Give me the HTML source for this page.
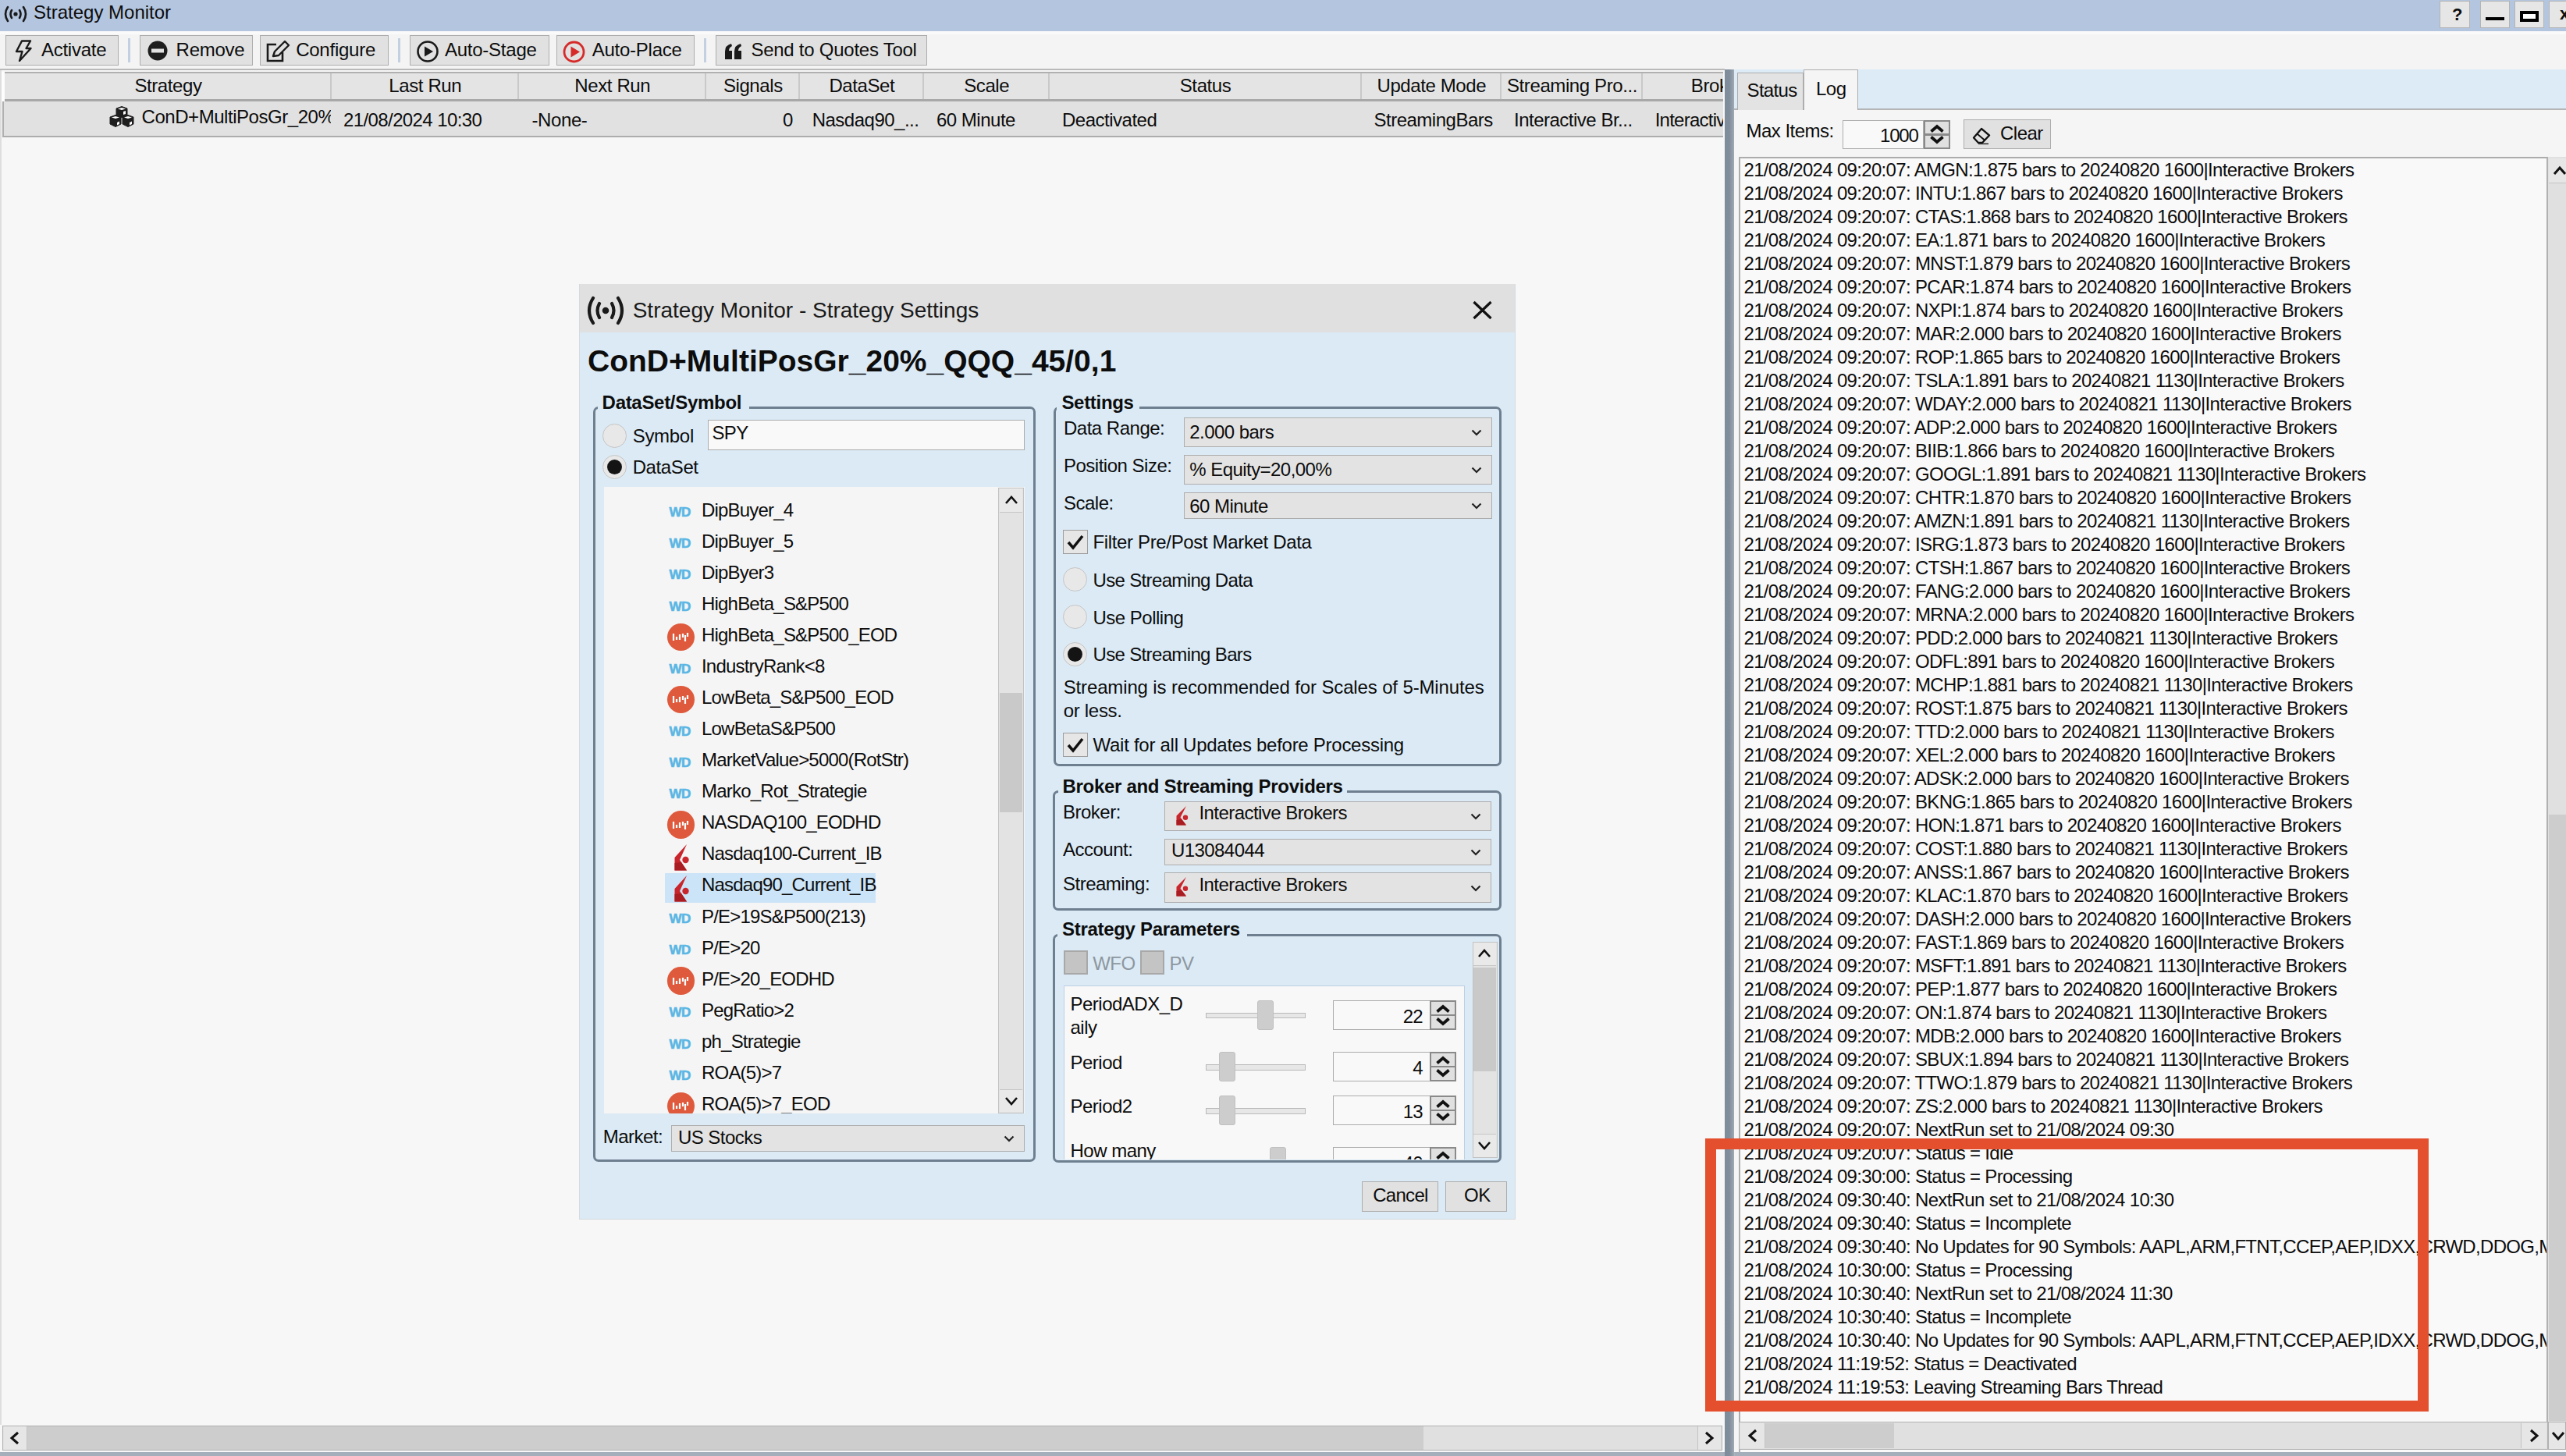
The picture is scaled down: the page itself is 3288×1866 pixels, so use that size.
<!DOCTYPE html><html><head><meta charset="utf-8"><style>
html,body{margin:0;padding:0}
body{width:3288px;height:1866px;overflow:hidden;position:relative;background:#f7f7f7;font-family:"Liberation Sans",sans-serif;color:#000}
.t{position:absolute;white-space:pre;line-height:1;color:#0d0d0d}
.b{position:absolute;box-sizing:border-box}
</style></head><body><div class="b" style="left:0.0px;top:0.0px;width:3288.0px;height:40.0px;background:#b3c5df"></div>
<svg class="b" style="left:4.0px;top:7.0px;" width="32" height="22" viewBox="0 0 32 22"><g fill="none" stroke="#1a1a1a" stroke-width="2.6" stroke-linecap="round"><path d="M6 2 Q0 11 6 20"/><path d="M26 2 Q32 11 26 20"/><path d="M11 6 Q8 11 11 16"/><path d="M21 6 Q24 11 21 16"/></g><circle cx="16" cy="11" r="2.6" fill="#1a1a1a"/></svg>
<div class="t" style="left:43.0px;top:4.2px;font-size:24px;font-weight:400;color:#0d0d0d;letter-spacing:0px;">Strategy Monitor</div>
<div class="b" style="left:3126.0px;top:1.0px;width:39.0px;height:35.0px;background:#e6e6e6;border:1.5px solid #b4b4b4"></div>
<div class="b" style="left:3178.0px;top:1.0px;width:38.0px;height:35.0px;background:#e6e6e6;border:1.5px solid #b4b4b4"></div>
<div class="b" style="left:3222.0px;top:1.0px;width:38.0px;height:35.0px;background:#e6e6e6;border:1.5px solid #b4b4b4"></div>
<div class="b" style="left:3266.0px;top:1.0px;width:38.0px;height:35.0px;background:#e6e6e6;border:1.5px solid #b4b4b4"></div>
<div class="t" style="left:3142.0px;top:8.4px;font-size:22px;font-weight:700;color:#0d0d0d;letter-spacing:0px;">?</div>
<div class="b" style="left:3185.0px;top:22.0px;width:24.0px;height:4.0px;background:#000"></div>
<div class="b" style="left:3229.0px;top:14.0px;width:24.0px;height:14.0px;border:4px solid #000;background:#fff"></div>
<div class="t" style="left:3280.0px;top:7.4px;font-size:22px;font-weight:700;color:#0d0d0d;letter-spacing:0px;">x</div>
<div class="b" style="left:0.0px;top:40.0px;width:3288.0px;height:49.0px;background:#f4f4f4"></div>
<div class="b" style="left:0.0px;top:40.0px;width:3288.0px;height:4.0px;background:#fafafa"></div>
<div class="b" style="left:0.0px;top:88.0px;width:2210.0px;height:2.0px;background:#b9b9b9"></div>
<div class="b" style="left:7.0px;top:45.0px;width:144.5px;height:38.5px;background:#e1e1e1;border:1.5px solid #adadad"></div>
<div class="t" style="left:52.9px;top:51.7px;font-size:24px;font-weight:400;color:#0d0d0d;letter-spacing:-0.25px;">Activate</div>
<div class="b" style="left:178.5px;top:45.0px;width:145.5px;height:38.5px;background:#e1e1e1;border:1.5px solid #adadad"></div>
<div class="t" style="left:225.6px;top:51.7px;font-size:24px;font-weight:400;color:#0d0d0d;letter-spacing:-0.25px;">Remove</div>
<div class="b" style="left:332.5px;top:45.0px;width:165.0px;height:38.5px;background:#e1e1e1;border:1.5px solid #adadad"></div>
<div class="t" style="left:379.2px;top:51.7px;font-size:24px;font-weight:400;color:#0d0d0d;letter-spacing:-0.25px;">Configure</div>
<div class="b" style="left:524.5px;top:45.0px;width:179.5px;height:38.5px;background:#e1e1e1;border:1.5px solid #adadad"></div>
<div class="t" style="left:570.0px;top:51.7px;font-size:24px;font-weight:400;color:#0d0d0d;letter-spacing:-0.25px;">Auto-Stage</div>
<div class="b" style="left:712.5px;top:45.0px;width:177.1px;height:38.5px;background:#e1e1e1;border:1.5px solid #adadad"></div>
<div class="t" style="left:758.7px;top:51.7px;font-size:24px;font-weight:400;color:#0d0d0d;letter-spacing:-0.25px;">Auto-Place</div>
<div class="b" style="left:916.5px;top:45.0px;width:271.0px;height:38.5px;background:#e1e1e1;border:1.5px solid #adadad"></div>
<div class="t" style="left:962.4px;top:51.7px;font-size:24px;font-weight:400;color:#0d0d0d;letter-spacing:-0.25px;">Send to Quotes Tool</div>
<div class="b" style="left:164.0px;top:49.0px;width:2.5px;height:31.0px;background:#c3d0e2"></div>
<div class="b" style="left:510.0px;top:49.0px;width:2.5px;height:31.0px;background:#c3d0e2"></div>
<div class="b" style="left:902.0px;top:49.0px;width:2.5px;height:31.0px;background:#c3d0e2"></div>
<svg class="b" style="left:19.0px;top:51.0px;" width="22" height="28" viewBox="0 0 22 28"><path d="M9 1.5 L20 1.5 L14.5 11 L20.5 11 L6 27 L9.5 15 L2 15 Z" fill="none" stroke="#1a1a1a" stroke-width="2.4" stroke-linejoin="round"/></svg>
<svg class="b" style="left:188.0px;top:52.0px;" width="28" height="26" viewBox="0 0 28 26"><circle cx="14" cy="13" r="12.5" fill="#1e1e1e"/><rect x="6" y="10.5" width="16" height="5" fill="#e1e1e1"/></svg>
<svg class="b" style="left:340.0px;top:51.0px;" width="32" height="30" viewBox="0 0 32 30"><path d="M14 6 H3 V27 H22 V16" fill="none" stroke="#1a1a1a" stroke-width="2.6"/><path d="M10 21 L12 15 L25 2 L30 7 L17 20 Z" fill="none" stroke="#1a1a1a" stroke-width="2.4" stroke-linejoin="round"/></svg>
<svg class="b" style="left:533.0px;top:51.0px;" width="30" height="30" viewBox="0 0 30 30"><circle cx="15" cy="15" r="12.5" fill="none" stroke="#1a1a1a" stroke-width="2.6"/><path d="M11 8.5 L22 15 L11 21.5 Z" fill="#1a1a1a"/></svg>
<svg class="b" style="left:720.0px;top:51.0px;" width="31" height="31" viewBox="0 0 31 31"><circle cx="15.5" cy="15.5" r="12.5" fill="none" stroke="#d62a2a" stroke-width="2.8"/><path d="M11.5 8.5 L23 15.5 L11.5 22.5 Z" fill="#d62a2a"/></svg>
<svg class="b" style="left:928.0px;top:55.0px;" width="24" height="22" viewBox="0 0 24 22"><path d="M1 21 V11 Q1 3 9 1 L10 4 Q6 6 6 10 H10 V21 Z M13 21 V11 Q13 3 21 1 L22 4 Q18 6 18 10 H22 V21 Z" fill="#1a1a1a"/></svg>
<div class="b" style="left:0.0px;top:90.0px;width:2210.0px;height:1776.0px;background:#f7f7f7"></div>
<div class="b" style="left:0.0px;top:92.0px;width:6.0px;height:38.0px;background:#fdfdfd"></div>
<div class="b" style="left:0.0px;top:90.0px;width:1.5px;height:1736.0px;background:#dedede"></div>
<div class="b" style="left:6.0px;top:92.0px;width:2202.0px;height:38.0px;background:#e4e4e4;border-top:2px solid #b0b0b0;border-bottom:3px solid #a8a8a8"></div>
<div class="b" style="left:6px;top:94px;width:2202px;height:33px;overflow:hidden">
<div class="b" style="left:0.0px;top:0;width:419.0px;height:33px;border-right:2px solid #c9c9c9"></div>
<div class="t" style="left:0.0px;width:419.0px;top:4.1px;font-size:24px;text-align:center;letter-spacing:-0.4px">Strategy</div>
<div class="b" style="left:419.0px;top:0;width:239.6px;height:33px;border-right:2px solid #c9c9c9"></div>
<div class="t" style="left:419.0px;width:239.6px;top:4.1px;font-size:24px;text-align:center;letter-spacing:-0.4px">Last Run</div>
<div class="b" style="left:658.6px;top:0;width:240.4px;height:33px;border-right:2px solid #c9c9c9"></div>
<div class="t" style="left:658.6px;width:240.4px;top:4.1px;font-size:24px;text-align:center;letter-spacing:-0.4px">Next Run</div>
<div class="b" style="left:899.0px;top:0;width:119.7px;height:33px;border-right:2px solid #c9c9c9"></div>
<div class="t" style="left:899.0px;width:119.7px;top:4.1px;font-size:24px;text-align:center;letter-spacing:-0.4px">Signals</div>
<div class="b" style="left:1018.7px;top:0;width:159.3px;height:33px;border-right:2px solid #c9c9c9"></div>
<div class="t" style="left:1018.7px;width:159.3px;top:4.1px;font-size:24px;text-align:center;letter-spacing:-0.4px">DataSet</div>
<div class="b" style="left:1178.0px;top:0;width:160.5px;height:33px;border-right:2px solid #c9c9c9"></div>
<div class="t" style="left:1178.0px;width:160.5px;top:4.1px;font-size:24px;text-align:center;letter-spacing:-0.4px">Scale</div>
<div class="b" style="left:1338.5px;top:0;width:400.2px;height:33px;border-right:2px solid #c9c9c9"></div>
<div class="t" style="left:1338.5px;width:400.2px;top:4.1px;font-size:24px;text-align:center;letter-spacing:-0.4px">Status</div>
<div class="b" style="left:1738.7px;top:0;width:179.3px;height:33px;border-right:2px solid #c9c9c9"></div>
<div class="t" style="left:1738.7px;width:179.3px;top:4.1px;font-size:24px;text-align:center;letter-spacing:-0.4px">Update Mode</div>
<div class="b" style="left:1918.0px;top:0;width:181.0px;height:33px;border-right:2px solid #c9c9c9"></div>
<div class="t" style="left:1918.0px;width:181.0px;top:4.1px;font-size:24px;text-align:center;letter-spacing:-0.4px">Streaming Pro...</div>
<div class="b" style="left:2099.0px;top:0;width:192.0px;height:33px;border-right:2px solid #c9c9c9"></div>
<div class="t" style="left:2099.0px;width:192.0px;top:4.1px;font-size:24px;text-align:center;letter-spacing:-0.4px">Broker</div>
</div>
<div class="b" style="left:3.0px;top:130.0px;width:2205.0px;height:46.0px;background:#e1e1e1;border-left:2px solid #b0b0b0;border-bottom:2px solid #adadad"></div>
<svg class="b" style="left:140.0px;top:136.0px;" width="33" height="29" viewBox="0 0 33 29"><g fill="#1e1e1e" stroke="#1e1e1e" stroke-width="1"><path d="M9 3 L16 0.5 L23 3 L23 12 L16 14.5 L9 12 Z"/><path d="M1 14 L8 11.5 L15 14 L15 23 L8 26.5 L1 23 Z"/><path d="M17 14 L24 11.5 L31 14 L31 23 L24 26.5 L17 23 Z"/></g><g fill="#fff"><path d="M11 3.5 L16 2 L21 3.5 L16 5 Z"/><path d="M3 14.5 L8 13 L13 14.5 L8 16 Z"/><path d="M19 14.5 L24 13 L29 14.5 L24 16 Z"/><path d="M10 21 L13 19.5 L13 23 L10 24.5 Z"/><path d="M26 21 L29 19.5 L29 23 L26 24.5 Z"/><path d="M18 7 L21 6 L21 10 L18 11 Z"/></g></svg>
<div class="b" style="left:181px;top:130px;width:243px;height:44px;overflow:hidden">
<div class="t" style="left:0.5px;top:7.7px;font-size:24px;letter-spacing:-0.45px">ConD+MultiPosGr_20%_QQQ</div>
</div>
<div class="t" style="left:440.0px;top:141.7px;font-size:24px;font-weight:400;color:#0d0d0d;letter-spacing:-0.6px;">21/08/2024 10:30</div>
<div class="t" style="left:681.5px;top:141.7px;font-size:24px;font-weight:400;color:#0d0d0d;letter-spacing:-0.4px;">-None-</div>
<div class="t" style="left:1003.0px;top:141.7px;font-size:24px;font-weight:400;color:#0d0d0d;letter-spacing:0px;">0</div>
<div class="t" style="left:1040.7px;top:141.7px;font-size:24px;font-weight:400;color:#0d0d0d;letter-spacing:-0.5px;">Nasdaq90_...</div>
<div class="t" style="left:1200.0px;top:141.7px;font-size:24px;font-weight:400;color:#0d0d0d;letter-spacing:-0.5px;">60 Minute</div>
<div class="t" style="left:1361.0px;top:141.7px;font-size:24px;font-weight:400;color:#0d0d0d;letter-spacing:-0.5px;">Deactivated</div>
<div class="t" style="left:1760.5px;top:141.7px;font-size:24px;font-weight:400;color:#0d0d0d;letter-spacing:-0.5px;">StreamingBars</div>
<div class="t" style="left:1940.0px;top:141.7px;font-size:24px;font-weight:400;color:#0d0d0d;letter-spacing:-0.5px;">Interactive Br...</div>
<div class="b" style="left:2120px;top:130px;width:88px;height:44px;overflow:hidden">
<div class="t" style="left:0.7px;top:11.7px;font-size:24px;letter-spacing:-0.75px">Interactive Brokers</div>
</div>
<div class="b" style="left:3.0px;top:1826.5px;width:2204.0px;height:32.5px;background:#e0e0e0;border:1.5px solid #b1b1b1"></div>
<div class="b" style="left:35.0px;top:1828.0px;width:1788.5px;height:29.5px;background:#cdcdcd"></div>
<div class="b" style="left:4.5px;top:1828.0px;width:30.5px;height:29.5px;background:#e6e6e6;border-right:1.5px solid #c4c4c4"></div>
<div class="b" style="left:2174.6px;top:1828.0px;width:30.9px;height:29.5px;background:#e6e6e6;border-left:1.5px solid #c4c4c4"></div>
<svg class="b" style="left:12.0px;top:1834.0px;" width="14" height="18" viewBox="0 0 14 18"><path d="M11 2 L3 9 L11 16" fill="none" stroke="#111" stroke-width="3"/></svg>
<svg class="b" style="left:2183.0px;top:1834.0px;" width="14" height="18" viewBox="0 0 14 18"><path d="M3 2 L11 9 L3 16" fill="none" stroke="#111" stroke-width="3"/></svg>
<div class="b" style="left:0.0px;top:1861.0px;width:3288.0px;height:5.0px;background:#a5aebb"></div>
<div class="b" style="left:2209.7px;top:89.0px;width:13.8px;height:1777.0px;background:linear-gradient(to right,#7d8b9b,#7f8d9c 45%,#9aa4ae 85%,#b4bac0)"></div>
<div class="b" style="left:2222.0px;top:89.0px;width:1066.0px;height:50.0px;background:#dcebf5"></div>
<div class="b" style="left:2222.0px;top:138.5px;width:1066.0px;height:2.0px;background:#b5b5b5"></div>
<div class="b" style="left:2222.0px;top:140.5px;width:1066.0px;height:1720.5px;background:#f5f5f5"></div>
<div class="b" style="left:2226.0px;top:93.0px;width:85.0px;height:47.5px;background:#e3e3e3;border:1.5px solid #adadad;border-bottom:none"></div>
<div class="b" style="left:2310.5px;top:89.0px;width:70.1px;height:52.0px;background:#f5f5f5;border:1.5px solid #adadad;border-bottom:none"></div>
<div class="t" style="left:2238.6px;top:103.5px;font-size:24px;font-weight:400;color:#0d0d0d;letter-spacing:-0.7px;">Status</div>
<div class="t" style="left:2326.9px;top:101.5px;font-size:24px;font-weight:400;color:#0d0d0d;letter-spacing:-0.4px;">Log</div>
<div class="t" style="left:2237.4px;top:155.7px;font-size:24px;font-weight:400;color:#0d0d0d;letter-spacing:-0.5px;">Max Items:</div>
<div class="b" style="left:2361.0px;top:153.6px;width:103.5px;height:37.4px;background:#f9f9f9;border:1.5px solid #acacac"></div>
<div class="t" style="left:2409.0px;top:161.7px;font-size:24px;font-weight:400;color:#0d0d0d;letter-spacing:-1.2px;">1000</div>
<div class="b" style="left:2464.5px;top:153.6px;width:34.5px;height:37.4px;background:#e0e0e0;border:2.5px solid #8a8a8a"></div>
<div class="b" style="left:2466.0px;top:171.0px;width:31.0px;height:2.5px;background:#8a8a8a"></div>
<svg class="b" style="left:2472.0px;top:158.0px;" width="20" height="28" viewBox="0 0 20 28"><path d="M2.5 10.5 L10 4 L17.5 10.5" fill="none" stroke="#111" stroke-width="3.8"/><path d="M2.5 17.5 L10 24 L17.5 17.5" fill="none" stroke="#111" stroke-width="3.8"/></svg>
<div class="b" style="left:2516.3px;top:153.0px;width:112.2px;height:38.4px;background:#e1e1e1;border:1.5px solid #adadad"></div>
<svg class="b" style="left:2526.0px;top:161.0px;" width="26" height="25" viewBox="0 0 26 25"><path d="M3 15.5 L13 4 L23 12.5 L14 22 H9 Z" fill="none" stroke="#111" stroke-width="2.3" stroke-linejoin="round"/><path d="M7.5 10.5 L17.5 19" stroke="#111" stroke-width="2"/><path d="M9 23.3 H22" stroke="#333" stroke-width="1.6"/></svg>
<div class="t" style="left:2563.0px;top:159.2px;font-size:24px;font-weight:400;color:#0d0d0d;letter-spacing:-0.5px;">Clear</div>
<div class="b" style="left:2228.0px;top:200.5px;width:1060.0px;height:1660.5px;background:#f9f9f9;border-top:2px solid #acacac;border-left:2px solid #acacac"></div>
<div class="b" style="left:2230px;top:202.5px;width:1034px;height:1620px;overflow:hidden">
<div class="t" style="left:4.5px;top:3.5px;font-size:24px;letter-spacing:-0.67px">21/08/2024 09:20:07: AMGN:1.875 bars to 20240820 1600|Interactive Brokers</div>
<div class="t" style="left:4.5px;top:33.5px;font-size:24px;letter-spacing:-0.67px">21/08/2024 09:20:07: INTU:1.867 bars to 20240820 1600|Interactive Brokers</div>
<div class="t" style="left:4.5px;top:63.5px;font-size:24px;letter-spacing:-0.67px">21/08/2024 09:20:07: CTAS:1.868 bars to 20240820 1600|Interactive Brokers</div>
<div class="t" style="left:4.5px;top:93.5px;font-size:24px;letter-spacing:-0.67px">21/08/2024 09:20:07: EA:1.871 bars to 20240820 1600|Interactive Brokers</div>
<div class="t" style="left:4.5px;top:123.5px;font-size:24px;letter-spacing:-0.67px">21/08/2024 09:20:07: MNST:1.879 bars to 20240820 1600|Interactive Brokers</div>
<div class="t" style="left:4.5px;top:153.5px;font-size:24px;letter-spacing:-0.67px">21/08/2024 09:20:07: PCAR:1.874 bars to 20240820 1600|Interactive Brokers</div>
<div class="t" style="left:4.5px;top:183.5px;font-size:24px;letter-spacing:-0.67px">21/08/2024 09:20:07: NXPI:1.874 bars to 20240820 1600|Interactive Brokers</div>
<div class="t" style="left:4.5px;top:213.5px;font-size:24px;letter-spacing:-0.67px">21/08/2024 09:20:07: MAR:2.000 bars to 20240820 1600|Interactive Brokers</div>
<div class="t" style="left:4.5px;top:243.5px;font-size:24px;letter-spacing:-0.67px">21/08/2024 09:20:07: ROP:1.865 bars to 20240820 1600|Interactive Brokers</div>
<div class="t" style="left:4.5px;top:273.5px;font-size:24px;letter-spacing:-0.67px">21/08/2024 09:20:07: TSLA:1.891 bars to 20240821 1130|Interactive Brokers</div>
<div class="t" style="left:4.5px;top:303.5px;font-size:24px;letter-spacing:-0.67px">21/08/2024 09:20:07: WDAY:2.000 bars to 20240821 1130|Interactive Brokers</div>
<div class="t" style="left:4.5px;top:333.5px;font-size:24px;letter-spacing:-0.67px">21/08/2024 09:20:07: ADP:2.000 bars to 20240820 1600|Interactive Brokers</div>
<div class="t" style="left:4.5px;top:363.5px;font-size:24px;letter-spacing:-0.67px">21/08/2024 09:20:07: BIIB:1.866 bars to 20240820 1600|Interactive Brokers</div>
<div class="t" style="left:4.5px;top:393.5px;font-size:24px;letter-spacing:-0.67px">21/08/2024 09:20:07: GOOGL:1.891 bars to 20240821 1130|Interactive Brokers</div>
<div class="t" style="left:4.5px;top:423.5px;font-size:24px;letter-spacing:-0.67px">21/08/2024 09:20:07: CHTR:1.870 bars to 20240820 1600|Interactive Brokers</div>
<div class="t" style="left:4.5px;top:453.5px;font-size:24px;letter-spacing:-0.67px">21/08/2024 09:20:07: AMZN:1.891 bars to 20240821 1130|Interactive Brokers</div>
<div class="t" style="left:4.5px;top:483.5px;font-size:24px;letter-spacing:-0.67px">21/08/2024 09:20:07: ISRG:1.873 bars to 20240820 1600|Interactive Brokers</div>
<div class="t" style="left:4.5px;top:513.5px;font-size:24px;letter-spacing:-0.67px">21/08/2024 09:20:07: CTSH:1.867 bars to 20240820 1600|Interactive Brokers</div>
<div class="t" style="left:4.5px;top:543.5px;font-size:24px;letter-spacing:-0.67px">21/08/2024 09:20:07: FANG:2.000 bars to 20240820 1600|Interactive Brokers</div>
<div class="t" style="left:4.5px;top:573.5px;font-size:24px;letter-spacing:-0.67px">21/08/2024 09:20:07: MRNA:2.000 bars to 20240820 1600|Interactive Brokers</div>
<div class="t" style="left:4.5px;top:603.5px;font-size:24px;letter-spacing:-0.67px">21/08/2024 09:20:07: PDD:2.000 bars to 20240821 1130|Interactive Brokers</div>
<div class="t" style="left:4.5px;top:633.5px;font-size:24px;letter-spacing:-0.67px">21/08/2024 09:20:07: ODFL:891 bars to 20240820 1600|Interactive Brokers</div>
<div class="t" style="left:4.5px;top:663.5px;font-size:24px;letter-spacing:-0.67px">21/08/2024 09:20:07: MCHP:1.881 bars to 20240821 1130|Interactive Brokers</div>
<div class="t" style="left:4.5px;top:693.5px;font-size:24px;letter-spacing:-0.67px">21/08/2024 09:20:07: ROST:1.875 bars to 20240821 1130|Interactive Brokers</div>
<div class="t" style="left:4.5px;top:723.5px;font-size:24px;letter-spacing:-0.67px">21/08/2024 09:20:07: TTD:2.000 bars to 20240821 1130|Interactive Brokers</div>
<div class="t" style="left:4.5px;top:753.5px;font-size:24px;letter-spacing:-0.67px">21/08/2024 09:20:07: XEL:2.000 bars to 20240820 1600|Interactive Brokers</div>
<div class="t" style="left:4.5px;top:783.5px;font-size:24px;letter-spacing:-0.67px">21/08/2024 09:20:07: ADSK:2.000 bars to 20240820 1600|Interactive Brokers</div>
<div class="t" style="left:4.5px;top:813.5px;font-size:24px;letter-spacing:-0.67px">21/08/2024 09:20:07: BKNG:1.865 bars to 20240820 1600|Interactive Brokers</div>
<div class="t" style="left:4.5px;top:843.5px;font-size:24px;letter-spacing:-0.67px">21/08/2024 09:20:07: HON:1.871 bars to 20240820 1600|Interactive Brokers</div>
<div class="t" style="left:4.5px;top:873.5px;font-size:24px;letter-spacing:-0.67px">21/08/2024 09:20:07: COST:1.880 bars to 20240821 1130|Interactive Brokers</div>
<div class="t" style="left:4.5px;top:903.5px;font-size:24px;letter-spacing:-0.67px">21/08/2024 09:20:07: ANSS:1.867 bars to 20240820 1600|Interactive Brokers</div>
<div class="t" style="left:4.5px;top:933.5px;font-size:24px;letter-spacing:-0.67px">21/08/2024 09:20:07: KLAC:1.870 bars to 20240820 1600|Interactive Brokers</div>
<div class="t" style="left:4.5px;top:963.5px;font-size:24px;letter-spacing:-0.67px">21/08/2024 09:20:07: DASH:2.000 bars to 20240820 1600|Interactive Brokers</div>
<div class="t" style="left:4.5px;top:993.5px;font-size:24px;letter-spacing:-0.67px">21/08/2024 09:20:07: FAST:1.869 bars to 20240820 1600|Interactive Brokers</div>
<div class="t" style="left:4.5px;top:1023.5px;font-size:24px;letter-spacing:-0.67px">21/08/2024 09:20:07: MSFT:1.891 bars to 20240821 1130|Interactive Brokers</div>
<div class="t" style="left:4.5px;top:1053.5px;font-size:24px;letter-spacing:-0.67px">21/08/2024 09:20:07: PEP:1.877 bars to 20240820 1600|Interactive Brokers</div>
<div class="t" style="left:4.5px;top:1083.5px;font-size:24px;letter-spacing:-0.67px">21/08/2024 09:20:07: ON:1.874 bars to 20240821 1130|Interactive Brokers</div>
<div class="t" style="left:4.5px;top:1113.5px;font-size:24px;letter-spacing:-0.67px">21/08/2024 09:20:07: MDB:2.000 bars to 20240820 1600|Interactive Brokers</div>
<div class="t" style="left:4.5px;top:1143.5px;font-size:24px;letter-spacing:-0.67px">21/08/2024 09:20:07: SBUX:1.894 bars to 20240821 1130|Interactive Brokers</div>
<div class="t" style="left:4.5px;top:1173.5px;font-size:24px;letter-spacing:-0.67px">21/08/2024 09:20:07: TTWO:1.879 bars to 20240821 1130|Interactive Brokers</div>
<div class="t" style="left:4.5px;top:1203.5px;font-size:24px;letter-spacing:-0.67px">21/08/2024 09:20:07: ZS:2.000 bars to 20240821 1130|Interactive Brokers</div>
<div class="t" style="left:4.5px;top:1233.5px;font-size:24px;letter-spacing:-0.67px">21/08/2024 09:20:07: NextRun set to 21/08/2024 09:30</div>
<div class="t" style="left:4.5px;top:1263.5px;font-size:24px;letter-spacing:-0.67px">21/08/2024 09:20:07: Status = Idle</div>
<div class="t" style="left:4.5px;top:1293.5px;font-size:24px;letter-spacing:-0.67px">21/08/2024 09:30:00: Status = Processing</div>
<div class="t" style="left:4.5px;top:1323.5px;font-size:24px;letter-spacing:-0.67px">21/08/2024 09:30:40: NextRun set to 21/08/2024 10:30</div>
<div class="t" style="left:4.5px;top:1353.5px;font-size:24px;letter-spacing:-0.67px">21/08/2024 09:30:40: Status = Incomplete</div>
<div class="t" style="left:4.5px;top:1383.5px;font-size:24px;letter-spacing:-0.67px">21/08/2024 09:30:40: No Updates for 90 Symbols: AAPL,ARM,FTNT,CCEP,AEP,IDXX,CRWD,DDOG,MDLZ,ORLY</div>
<div class="t" style="left:4.5px;top:1413.5px;font-size:24px;letter-spacing:-0.67px">21/08/2024 10:30:00: Status = Processing</div>
<div class="t" style="left:4.5px;top:1443.5px;font-size:24px;letter-spacing:-0.67px">21/08/2024 10:30:40: NextRun set to 21/08/2024 11:30</div>
<div class="t" style="left:4.5px;top:1473.5px;font-size:24px;letter-spacing:-0.67px">21/08/2024 10:30:40: Status = Incomplete</div>
<div class="t" style="left:4.5px;top:1503.5px;font-size:24px;letter-spacing:-0.67px">21/08/2024 10:30:40: No Updates for 90 Symbols: AAPL,ARM,FTNT,CCEP,AEP,IDXX,CRWD,DDOG,MDLZ,ORLY</div>
<div class="t" style="left:4.5px;top:1533.5px;font-size:24px;letter-spacing:-0.67px">21/08/2024 11:19:52: Status = Deactivated</div>
<div class="t" style="left:4.5px;top:1563.5px;font-size:24px;letter-spacing:-0.67px">21/08/2024 11:19:53: Leaving Streaming Bars Thread</div>
</div>
<div class="b" style="left:3263.3px;top:201.0px;width:24.7px;height:1622.0px;background:#e0e0e0;border-left:2.5px solid #b1b1b1"></div>
<div class="b" style="left:3266.0px;top:1044.0px;width:22.0px;height:777.0px;background:#cdcdcd"></div>
<div class="b" style="left:3266.0px;top:202.5px;width:22.0px;height:32.5px;background:#e6e6e6;border-bottom:1.5px solid #c4c4c4"></div>
<svg class="b" style="left:3271.0px;top:212.0px;" width="18" height="14" viewBox="0 0 18 14"><path d="M2 11 L9 3 L16 11" fill="none" stroke="#111" stroke-width="3"/></svg>
<div class="b" style="left:2228.0px;top:1822.0px;width:1036.5px;height:35.5px;background:#e0e0e0;border:1.5px solid #b1b1b1"></div>
<div class="b" style="left:2262.0px;top:1823.5px;width:165.0px;height:32.5px;background:#cdcdcd"></div>
<div class="b" style="left:2229.5px;top:1823.5px;width:32.5px;height:32.5px;background:#e6e6e6;border-right:1.5px solid #c4c4c4"></div>
<div class="b" style="left:3230.0px;top:1823.5px;width:33.0px;height:32.5px;background:#e6e6e6;border-left:1.5px solid #c4c4c4"></div>
<svg class="b" style="left:2239.0px;top:1831.0px;" width="14" height="18" viewBox="0 0 14 18"><path d="M11 2 L3 9 L11 16" fill="none" stroke="#111" stroke-width="3"/></svg>
<svg class="b" style="left:3240.0px;top:1831.0px;" width="14" height="18" viewBox="0 0 14 18"><path d="M3 2 L11 9 L3 16" fill="none" stroke="#111" stroke-width="3"/></svg>
<div class="b" style="left:3264.5px;top:1822.0px;width:23.5px;height:35.5px;background:#e6e6e6;border:1.5px solid #b1b1b1"></div>
<svg class="b" style="left:3269.0px;top:1833.0px;" width="18" height="14" viewBox="0 0 18 14"><path d="M2 3 L9 11 L16 3" fill="none" stroke="#111" stroke-width="3"/></svg>
<div class="b" style="left:2185.0px;top:1459.0px;width:927.0px;height:349.5px;border:14px solid #e4502d"></div>
<div class="b" style="left:742.0px;top:364.0px;width:1200.0px;height:62.0px;background:#e0e0e0"></div>
<div class="b" style="left:742.0px;top:426.0px;width:1200.0px;height:1136.0px;background:#dbeaf5"></div>
<div class="b" style="left:742.0px;top:364.0px;width:1200.0px;height:1199.0px;border:1.5px solid #d3dbe0;border-top:none"></div>
<svg class="b" style="left:751.0px;top:379.0px;" width="50" height="38" viewBox="0 0 50 38"><g fill="none" stroke="#1a1a1a" stroke-width="4.2" stroke-linecap="round"><path d="M9 3 Q-1 19 9 35"/><path d="M41 3 Q51 19 41 35"/><path d="M17 10 Q12 19 17 28"/><path d="M33 10 Q38 19 33 28"/></g><circle cx="25" cy="19" r="4.3" fill="#1a1a1a"/></svg>
<div class="t" style="left:810.7px;top:384.3px;font-size:28px;font-weight:400;color:#1a1a1a;letter-spacing:0px;">Strategy Monitor - Strategy Settings</div>
<svg class="b" style="left:1886.0px;top:385.0px;" width="27" height="25" viewBox="0 0 27 25"><path d="M2.5 2 L24.5 23 M24.5 2 L2.5 23" stroke="#111" stroke-width="3.2"/></svg>
<div class="t" style="left:753.0px;top:443.0px;font-size:39px;font-weight:700;color:#0d0d0d;letter-spacing:0px;">ConD+MultiPosGr_20%_QQQ_45/0,1</div>
<div class="b" style="left:759.5px;top:521.0px;width:567.5px;height:967.5px;border:3px solid #6e7f90;border-radius:7px"></div>
<div class="b" style="left:765.6px;top:518.5px;width:194.0px;height:8.0px;background:#dbeaf5"></div>
<div class="t" style="left:771.6px;top:503.7px;font-size:24px;font-weight:700;color:#0d0d0d;letter-spacing:-0.3px;">DataSet/Symbol</div>
<div class="b" style="left:772.0px;top:542.5px;width:31px;height:31px;border-radius:50%;background:#e8e8e8;border:1.5px solid #c5c5c5"></div>
<div class="t" style="left:810.7px;top:547.2px;font-size:24px;font-weight:400;color:#0d0d0d;letter-spacing:-0.3px;">Symbol</div>
<div class="b" style="left:906.5px;top:538.0px;width:406.5px;height:39.0px;background:#f9f9f9;border:1.5px solid #acacac"></div>
<div class="t" style="left:912.4px;top:542.7px;font-size:24px;font-weight:400;color:#0d0d0d;letter-spacing:-0.6px;">SPY</div>
<div class="b" style="left:772.0px;top:582.5px;width:31px;height:31px;border-radius:50%;background:#e8e8e8;border:1.5px solid #c5c5c5"></div>
<div class="b" style="left:778.0px;top:588.5px;width:19px;height:19px;border-radius:50%;background:#141414"></div>
<div class="t" style="left:810.7px;top:586.9px;font-size:24px;font-weight:400;color:#0d0d0d;letter-spacing:-0.4px;">DataSet</div>
<div class="b" style="left:773.5px;top:623.5px;width:539.5px;height:803.5px;background:#f5f5f5"></div>
<div class="b" style="left:773.5px;top:623.5px;width:505.5px;height:803.5px;overflow:hidden">
<div class="t" style="left:84.0px;top:-18.3px;font-size:17px;font-weight:700;color:#5ab6e4;letter-spacing:-0.6px;-webkit-text-stroke:0.6px #5ab6e4">WD</div>
<div class="t" style="left:125.5px;top:-25.0px;font-size:24px;letter-spacing:-0.8px">DipBuyer_3</div>
<div class="t" style="left:84.0px;top:24.8px;font-size:17px;font-weight:700;color:#5ab6e4;letter-spacing:-0.6px;-webkit-text-stroke:0.6px #5ab6e4">WD</div>
<div class="t" style="left:125.5px;top:18.0px;font-size:24px;letter-spacing:-0.8px">DipBuyer_4</div>
<div class="t" style="left:84.0px;top:64.8px;font-size:17px;font-weight:700;color:#5ab6e4;letter-spacing:-0.6px;-webkit-text-stroke:0.6px #5ab6e4">WD</div>
<div class="t" style="left:125.5px;top:58.1px;font-size:24px;letter-spacing:-0.8px">DipBuyer_5</div>
<div class="t" style="left:84.0px;top:104.9px;font-size:17px;font-weight:700;color:#5ab6e4;letter-spacing:-0.6px;-webkit-text-stroke:0.6px #5ab6e4">WD</div>
<div class="t" style="left:125.5px;top:98.2px;font-size:24px;letter-spacing:-0.8px">DipByer3</div>
<div class="t" style="left:84.0px;top:145.0px;font-size:17px;font-weight:700;color:#5ab6e4;letter-spacing:-0.6px;-webkit-text-stroke:0.6px #5ab6e4">WD</div>
<div class="t" style="left:125.5px;top:138.3px;font-size:24px;letter-spacing:-0.8px">HighBeta_S&amp;P500</div>
<div class="b" style="left:81.0px;top:175.1px;width:35.5px;height:35.5px;border-radius:50%;background:#df5a3c"></div>
<svg class="b" style="left:87.5px;top:184.6px" width="22" height="16" viewBox="0 0 22 16"><g stroke="#fff" stroke-width="2.2" fill="none"><path d="M2 4 V13 M6 8 V12 M10 5 V12 M14 4 V9 M17 6 V14 M20 3 V8"/></g></svg>
<div class="t" style="left:125.5px;top:178.3px;font-size:24px;letter-spacing:-0.8px">HighBeta_S&amp;P500_EOD</div>
<div class="t" style="left:84.0px;top:225.1px;font-size:17px;font-weight:700;color:#5ab6e4;letter-spacing:-0.6px;-webkit-text-stroke:0.6px #5ab6e4">WD</div>
<div class="t" style="left:125.5px;top:218.4px;font-size:24px;letter-spacing:-0.8px">IndustryRank&lt;8</div>
<div class="b" style="left:81.0px;top:255.3px;width:35.5px;height:35.5px;border-radius:50%;background:#df5a3c"></div>
<svg class="b" style="left:87.5px;top:264.8px" width="22" height="16" viewBox="0 0 22 16"><g stroke="#fff" stroke-width="2.2" fill="none"><path d="M2 4 V13 M6 8 V12 M10 5 V12 M14 4 V9 M17 6 V14 M20 3 V8"/></g></svg>
<div class="t" style="left:125.5px;top:258.5px;font-size:24px;letter-spacing:-0.8px">LowBeta_S&amp;P500_EOD</div>
<div class="t" style="left:84.0px;top:305.3px;font-size:17px;font-weight:700;color:#5ab6e4;letter-spacing:-0.6px;-webkit-text-stroke:0.6px #5ab6e4">WD</div>
<div class="t" style="left:125.5px;top:298.5px;font-size:24px;letter-spacing:-0.8px">LowBetaS&amp;P500</div>
<div class="t" style="left:84.0px;top:345.3px;font-size:17px;font-weight:700;color:#5ab6e4;letter-spacing:-0.6px;-webkit-text-stroke:0.6px #5ab6e4">WD</div>
<div class="t" style="left:125.5px;top:338.6px;font-size:24px;letter-spacing:-0.8px">MarketValue&gt;5000(RotStr)</div>
<div class="t" style="left:84.0px;top:385.4px;font-size:17px;font-weight:700;color:#5ab6e4;letter-spacing:-0.6px;-webkit-text-stroke:0.6px #5ab6e4">WD</div>
<div class="t" style="left:125.5px;top:378.7px;font-size:24px;letter-spacing:-0.8px">Marko_Rot_Strategie</div>
<div class="b" style="left:81.0px;top:415.6px;width:35.5px;height:35.5px;border-radius:50%;background:#df5a3c"></div>
<svg class="b" style="left:87.5px;top:425.1px" width="22" height="16" viewBox="0 0 22 16"><g stroke="#fff" stroke-width="2.2" fill="none"><path d="M2 4 V13 M6 8 V12 M10 5 V12 M14 4 V9 M17 6 V14 M20 3 V8"/></g></svg>
<div class="t" style="left:125.5px;top:418.7px;font-size:24px;letter-spacing:-0.8px">NASDAQ100_EODHD</div>
<svg class="b" style="left:90.0px;top:458.3px" width="20" height="34" viewBox="0 0 20 34"><path d="M16 0 L0.5 17 L0.5 33.5 L16 33.5 L7 20 Z" fill="#c9252c"/><path d="M0.5 24 L0.5 33.5 L16 33.5 L9 23 Z" fill="#a81c22"/><circle cx="14.5" cy="20" r="4.2" fill="#c9252c"/></svg>
<div class="t" style="left:125.5px;top:458.8px;font-size:24px;letter-spacing:-0.8px">Nasdaq100-Current_IB</div>
<div class="b" style="left:78.5px;top:495.5px;width:270px;height:38px;background:#cce4f7"></div>
<svg class="b" style="left:90.0px;top:498.4px" width="20" height="34" viewBox="0 0 20 34"><path d="M16 0 L0.5 17 L0.5 33.5 L16 33.5 L7 20 Z" fill="#c9252c"/><path d="M0.5 24 L0.5 33.5 L16 33.5 L9 23 Z" fill="#a81c22"/><circle cx="14.5" cy="20" r="4.2" fill="#c9252c"/></svg>
<div class="t" style="left:125.5px;top:498.9px;font-size:24px;letter-spacing:-0.8px">Nasdaq90_Current_IB</div>
<div class="t" style="left:84.0px;top:545.7px;font-size:17px;font-weight:700;color:#5ab6e4;letter-spacing:-0.6px;-webkit-text-stroke:0.6px #5ab6e4">WD</div>
<div class="t" style="left:125.5px;top:539.0px;font-size:24px;letter-spacing:-0.8px">P/E&gt;19S&amp;P500(213)</div>
<div class="t" style="left:84.0px;top:585.8px;font-size:17px;font-weight:700;color:#5ab6e4;letter-spacing:-0.6px;-webkit-text-stroke:0.6px #5ab6e4">WD</div>
<div class="t" style="left:125.5px;top:579.0px;font-size:24px;letter-spacing:-0.8px">P/E&gt;20</div>
<div class="b" style="left:81.0px;top:615.9px;width:35.5px;height:35.5px;border-radius:50%;background:#df5a3c"></div>
<svg class="b" style="left:87.5px;top:625.4px" width="22" height="16" viewBox="0 0 22 16"><g stroke="#fff" stroke-width="2.2" fill="none"><path d="M2 4 V13 M6 8 V12 M10 5 V12 M14 4 V9 M17 6 V14 M20 3 V8"/></g></svg>
<div class="t" style="left:125.5px;top:619.1px;font-size:24px;letter-spacing:-0.8px">P/E&gt;20_EODHD</div>
<div class="t" style="left:84.0px;top:665.9px;font-size:17px;font-weight:700;color:#5ab6e4;letter-spacing:-0.6px;-webkit-text-stroke:0.6px #5ab6e4">WD</div>
<div class="t" style="left:125.5px;top:659.2px;font-size:24px;letter-spacing:-0.8px">PegRatio&gt;2</div>
<div class="t" style="left:84.0px;top:706.0px;font-size:17px;font-weight:700;color:#5ab6e4;letter-spacing:-0.6px;-webkit-text-stroke:0.6px #5ab6e4">WD</div>
<div class="t" style="left:125.5px;top:699.2px;font-size:24px;letter-spacing:-0.8px">ph_Strategie</div>
<div class="t" style="left:84.0px;top:746.0px;font-size:17px;font-weight:700;color:#5ab6e4;letter-spacing:-0.6px;-webkit-text-stroke:0.6px #5ab6e4">WD</div>
<div class="t" style="left:125.5px;top:739.3px;font-size:24px;letter-spacing:-0.8px">ROA(5)&gt;7</div>
<div class="b" style="left:81.0px;top:776.2px;width:35.5px;height:35.5px;border-radius:50%;background:#df5a3c"></div>
<svg class="b" style="left:87.5px;top:785.7px" width="22" height="16" viewBox="0 0 22 16"><g stroke="#fff" stroke-width="2.2" fill="none"><path d="M2 4 V13 M6 8 V12 M10 5 V12 M14 4 V9 M17 6 V14 M20 3 V8"/></g></svg>
<div class="t" style="left:125.5px;top:779.4px;font-size:24px;letter-spacing:-0.8px">ROA(5)&gt;7_EOD</div>
<div class="t" style="left:84.0px;top:826.2px;font-size:17px;font-weight:700;color:#5ab6e4;letter-spacing:-0.6px;-webkit-text-stroke:0.6px #5ab6e4">WD</div>
<div class="t" style="left:125.5px;top:819.4px;font-size:24px;letter-spacing:-0.8px">ROA(5)&gt;7_WD</div>
</div>
<div class="b" style="left:1279.0px;top:624.5px;width:32.5px;height:802.5px;background:#e3e3e3;border:1.5px solid #c2c2c2"></div>
<div class="b" style="left:1281.0px;top:888.0px;width:29.0px;height:152.7px;background:#c9c9c9"></div>
<div class="b" style="left:1280.5px;top:626.0px;width:29.5px;height:31.0px;background:#e9e9e9;border-bottom:1.5px solid #c6c6c6"></div>
<div class="b" style="left:1280.5px;top:1395.8px;width:29.5px;height:29.7px;background:#e9e9e9;border-top:1.5px solid #c6c6c6"></div>
<svg class="b" style="left:1287.0px;top:634.0px;" width="18" height="14" viewBox="0 0 18 14"><path d="M2 11 L9 3 L16 11" fill="none" stroke="#111" stroke-width="2.6"/></svg>
<svg class="b" style="left:1287.0px;top:1404.0px;" width="18" height="14" viewBox="0 0 18 14"><path d="M2 3 L9 11 L16 3" fill="none" stroke="#111" stroke-width="2.6"/></svg>
<div class="t" style="left:772.7px;top:1445.4px;font-size:24px;font-weight:400;color:#0d0d0d;letter-spacing:-0.5px;">Market:</div>
<div class="b" style="left:860.3px;top:1442.0px;width:452.7px;height:34.0px;background:#e3e3e3;border:1.5px solid #adadad"></div>
<div class="t" style="left:869.0px;top:1445.7px;font-size:24px;font-weight:400;color:#0d0d0d;letter-spacing:-0.55px;">US Stocks</div>
<svg class="b" style="left:1285.0px;top:1454.0px;" width="16" height="10" viewBox="0 0 16 10"><path d="M2.5 2.5 L8 8 L13.5 2.5" fill="none" stroke="#222" stroke-width="2.2"/></svg>
<div class="b" style="left:1350.0px;top:520.8px;width:574.0px;height:460.9px;border:3px solid #6e7f90;border-radius:7px"></div>
<div class="b" style="left:1354.4px;top:518.3px;width:106.0px;height:8.0px;background:#dbeaf5"></div>
<div class="t" style="left:1360.4px;top:503.5px;font-size:24px;font-weight:700;color:#0d0d0d;letter-spacing:-0.3px;">Settings</div>
<div class="t" style="left:1363.0px;top:536.7px;font-size:24px;font-weight:400;color:#0d0d0d;letter-spacing:-0.5px;">Data Range:</div>
<div class="b" style="left:1516.6px;top:535.0px;width:395.0px;height:37.5px;background:#e3e3e3;border:1.5px solid #adadad"></div>
<div class="t" style="left:1524.3px;top:541.7px;font-size:24px;font-weight:400;color:#0d0d0d;letter-spacing:-0.55px;">2.000 bars</div>
<svg class="b" style="left:1883.6px;top:548.8px;" width="16" height="10" viewBox="0 0 16 10"><path d="M2.5 2.5 L8 8 L13.5 2.5" fill="none" stroke="#222" stroke-width="2.2"/></svg>
<div class="t" style="left:1363.0px;top:585.0px;font-size:24px;font-weight:400;color:#0d0d0d;letter-spacing:-0.5px;">Position Size:</div>
<div class="b" style="left:1516.6px;top:582.7px;width:395.0px;height:38.7px;background:#e3e3e3;border:1.5px solid #adadad"></div>
<div class="t" style="left:1524.3px;top:589.7px;font-size:24px;font-weight:400;color:#0d0d0d;letter-spacing:-0.55px;">% Equity=20,00%</div>
<svg class="b" style="left:1883.6px;top:597.0px;" width="16" height="10" viewBox="0 0 16 10"><path d="M2.5 2.5 L8 8 L13.5 2.5" fill="none" stroke="#222" stroke-width="2.2"/></svg>
<div class="t" style="left:1363.0px;top:633.4px;font-size:24px;font-weight:400;color:#0d0d0d;letter-spacing:-0.5px;">Scale:</div>
<div class="b" style="left:1516.6px;top:631.0px;width:395.0px;height:34.2px;background:#e3e3e3;border:1.5px solid #adadad"></div>
<div class="t" style="left:1524.3px;top:637.2px;font-size:24px;font-weight:400;color:#0d0d0d;letter-spacing:-0.55px;">60 Minute</div>
<svg class="b" style="left:1883.6px;top:643.1px;" width="16" height="10" viewBox="0 0 16 10"><path d="M2.5 2.5 L8 8 L13.5 2.5" fill="none" stroke="#222" stroke-width="2.2"/></svg>
<div class="b" style="left:1362.0px;top:678.8px;width:31.5px;height:31.0px;background:#e6e6e6;border:1.5px solid #9d9d9d"></div>
<svg class="b" style="left:1366.0px;top:683.8px;" width="24" height="22" viewBox="0 0 24 22"><path d="M3 11 L9 18 L21 3" fill="none" stroke="#111" stroke-width="3.6"/></svg>
<div class="t" style="left:1400.5px;top:683.3px;font-size:24px;font-weight:400;color:#0d0d0d;letter-spacing:-0.35px;">Filter Pre/Post Market Data</div>
<div class="b" style="left:1362.0px;top:726.5px;width:31px;height:31px;border-radius:50%;background:#e8e8e8;border:1.5px solid #c5c5c5"></div>
<div class="t" style="left:1400.5px;top:731.7px;font-size:24px;font-weight:400;color:#0d0d0d;letter-spacing:-0.65px;">Use Streaming Data</div>
<div class="b" style="left:1362.0px;top:774.5px;width:31px;height:31px;border-radius:50%;background:#e8e8e8;border:1.5px solid #c5c5c5"></div>
<div class="t" style="left:1400.5px;top:780.0px;font-size:24px;font-weight:400;color:#0d0d0d;letter-spacing:-0.5px;">Use Polling</div>
<div class="b" style="left:1362.0px;top:822.5px;width:31px;height:31px;border-radius:50%;background:#e8e8e8;border:1.5px solid #c5c5c5"></div>
<div class="b" style="left:1368.0px;top:828.5px;width:19px;height:19px;border-radius:50%;background:#141414"></div>
<div class="t" style="left:1400.5px;top:826.9px;font-size:24px;font-weight:400;color:#0d0d0d;letter-spacing:-0.65px;">Use Streaming Bars</div>
<div class="t" style="left:1362.7px;top:869.2px;font-size:24px;font-weight:400;color:#0d0d0d;letter-spacing:-0.14px;">Streaming is recommended for Scales of 5-Minutes</div>
<div class="t" style="left:1362.7px;top:899.4px;font-size:24px;font-weight:400;color:#0d0d0d;letter-spacing:-0.3px;">or less.</div>
<div class="b" style="left:1362.0px;top:938.8px;width:31.5px;height:31.0px;background:#e6e6e6;border:1.5px solid #9d9d9d"></div>
<svg class="b" style="left:1366.0px;top:943.8px;" width="24" height="22" viewBox="0 0 24 22"><path d="M3 11 L9 18 L21 3" fill="none" stroke="#111" stroke-width="3.6"/></svg>
<div class="t" style="left:1400.5px;top:943.3px;font-size:24px;font-weight:400;color:#0d0d0d;letter-spacing:-0.27px;">Wait for all Updates before Processing</div>
<div class="b" style="left:1349.4px;top:1013.1px;width:574.6px;height:153.5px;border:3px solid #6e7f90;border-radius:7px"></div>
<div class="b" style="left:1355.5px;top:1010.6px;width:370.0px;height:8.0px;background:#dbeaf5"></div>
<div class="t" style="left:1361.5px;top:995.8px;font-size:24px;font-weight:700;color:#0d0d0d;letter-spacing:-0.3px;">Broker and Streaming Providers</div>
<div class="t" style="left:1362.0px;top:1028.7px;font-size:24px;font-weight:400;color:#0d0d0d;letter-spacing:-0.5px;">Broker:</div>
<div class="b" style="left:1492.0px;top:1026.8px;width:419.0px;height:37.8px;background:#e3e3e3;border:1.5px solid #adadad"></div>
<svg class="b" style="left:1507.0px;top:1032.6px;" width="17" height="25" viewBox="0 0 17 25"><path d="M13 0 L0.5 12.5 L0.5 24.5 L13 24.5 L5.5 14.5 Z" fill="#c9252c"/><path d="M0.5 18 L0.5 24.5 L13 24.5 L7 17 Z" fill="#a81c22"/><circle cx="12" cy="14.8" r="3.2" fill="#c9252c"/></svg>
<div class="t" style="left:1536.4px;top:1029.7px;font-size:24px;font-weight:400;color:#0d0d0d;letter-spacing:-0.55px;">Interactive Brokers</div>
<svg class="b" style="left:1883.0px;top:1040.7px;" width="16" height="10" viewBox="0 0 16 10"><path d="M2.5 2.5 L8 8 L13.5 2.5" fill="none" stroke="#222" stroke-width="2.2"/></svg>
<div class="t" style="left:1362.0px;top:1076.7px;font-size:24px;font-weight:400;color:#0d0d0d;letter-spacing:-0.5px;">Account:</div>
<div class="b" style="left:1492.0px;top:1074.7px;width:419.0px;height:33.9px;background:#e3e3e3;border:1.5px solid #adadad"></div>
<div class="t" style="left:1500.9px;top:1077.7px;font-size:24px;font-weight:400;color:#0d0d0d;letter-spacing:-0.55px;">U13084044</div>
<svg class="b" style="left:1883.0px;top:1086.7px;" width="16" height="10" viewBox="0 0 16 10"><path d="M2.5 2.5 L8 8 L13.5 2.5" fill="none" stroke="#222" stroke-width="2.2"/></svg>
<div class="t" style="left:1362.0px;top:1121.0px;font-size:24px;font-weight:400;color:#0d0d0d;letter-spacing:-0.5px;">Streaming:</div>
<div class="b" style="left:1492.0px;top:1118.4px;width:419.0px;height:38.6px;background:#e3e3e3;border:1.5px solid #adadad"></div>
<svg class="b" style="left:1507.0px;top:1124.2px;" width="17" height="25" viewBox="0 0 17 25"><path d="M13 0 L0.5 12.5 L0.5 24.5 L13 24.5 L5.5 14.5 Z" fill="#c9252c"/><path d="M0.5 18 L0.5 24.5 L13 24.5 L7 17 Z" fill="#a81c22"/><circle cx="12" cy="14.8" r="3.2" fill="#c9252c"/></svg>
<div class="t" style="left:1536.4px;top:1121.7px;font-size:24px;font-weight:400;color:#0d0d0d;letter-spacing:-0.55px;">Interactive Brokers</div>
<svg class="b" style="left:1883.0px;top:1132.7px;" width="16" height="10" viewBox="0 0 16 10"><path d="M2.5 2.5 L8 8 L13.5 2.5" fill="none" stroke="#222" stroke-width="2.2"/></svg>
<div class="b" style="left:1349.4px;top:1196.7px;width:574.6px;height:293.5px;border:3px solid #6e7f90;border-radius:7px"></div>
<div class="b" style="left:1355.0px;top:1194.2px;width:243.0px;height:8.0px;background:#dbeaf5"></div>
<div class="t" style="left:1361.0px;top:1179.4px;font-size:24px;font-weight:700;color:#0d0d0d;letter-spacing:-0.3px;">Strategy Parameters</div>
<div class="b" style="left:1362.8px;top:1218.3px;width:31.0px;height:31.0px;background:#c4c4c4;border:2px solid #a8a8a8"></div>
<div class="t" style="left:1400.3px;top:1222.7px;font-size:24px;font-weight:400;color:#8d979f;letter-spacing:-0.6px;">WFO</div>
<div class="b" style="left:1460.5px;top:1218.3px;width:31.0px;height:31.0px;background:#c4c4c4;border:2px solid #a8a8a8"></div>
<div class="t" style="left:1498.6px;top:1222.7px;font-size:24px;font-weight:400;color:#8d979f;letter-spacing:-0.6px;">PV</div>
<div class="b" style="left:1362.8px;top:1263px;width:514.2px;height:222.5px;background:#f8f8f8;border:1.5px solid #bcd0e3;border-bottom:none;overflow:hidden">
<div class="t" style="left:7.7px;top:10.9px;font-size:24px;letter-spacing:-0.5px">PeriodADX_D</div>
<div class="t" style="left:7.7px;top:41.2px;font-size:24px;letter-spacing:-0.5px">aily</div>
<div class="b" style="left:181.7px;top:33.5px;width:127.5px;height:7.5px;background:#e7e7e7;border:1.5px solid #b9b9b9"></div>
<div class="b" style="left:247.7px;top:18.1px;width:21px;height:38px;background:#cdcdcd;border:1px solid #c0c0c0;border-radius:3px"></div>
<div class="b" style="left:344.0px;top:18.1px;width:125px;height:38px;background:#f9f9f9;border:1.5px solid #acacac"></div>
<div class="t" style="left:344.0px;width:115px;text-align:right;top:26.8px;font-size:24px;letter-spacing:-0.8px">22</div>
<div class="b" style="left:468.7px;top:18.1px;width:34px;height:38px;background:#e0e0e0;border:2.5px solid #8a8a8a"></div>
<div class="b" style="left:469.7px;top:35.6px;width:32px;height:2.5px;background:#8a8a8a"></div>
<svg class="b" style="left:475.7px;top:22.1px" width="20" height="30" viewBox="0 0 20 30"><path d="M2.5 10.5 L10 4 L17.5 10.5" fill="none" stroke="#111" stroke-width="3.8"/><path d="M2.5 19.5 L10 26 L17.5 19.5" fill="none" stroke="#111" stroke-width="3.8"/></svg>
<div class="t" style="left:7.7px;top:86.2px;font-size:24px;letter-spacing:-0.5px">Period</div>
<div class="b" style="left:181.7px;top:100.0px;width:127.5px;height:7.5px;background:#e7e7e7;border:1.5px solid #b9b9b9"></div>
<div class="b" style="left:198.0px;top:84.3px;width:21px;height:38px;background:#cdcdcd;border:1px solid #c0c0c0;border-radius:3px"></div>
<div class="b" style="left:344.0px;top:84.3px;width:125px;height:38px;background:#f9f9f9;border:1.5px solid #acacac"></div>
<div class="t" style="left:344.0px;width:115px;text-align:right;top:93.0px;font-size:24px;letter-spacing:-0.8px">4</div>
<div class="b" style="left:468.7px;top:84.3px;width:34px;height:38px;background:#e0e0e0;border:2.5px solid #8a8a8a"></div>
<div class="b" style="left:469.7px;top:101.8px;width:32px;height:2.5px;background:#8a8a8a"></div>
<svg class="b" style="left:475.7px;top:88.3px" width="20" height="30" viewBox="0 0 20 30"><path d="M2.5 10.5 L10 4 L17.5 10.5" fill="none" stroke="#111" stroke-width="3.8"/><path d="M2.5 19.5 L10 26 L17.5 19.5" fill="none" stroke="#111" stroke-width="3.8"/></svg>
<div class="t" style="left:7.7px;top:142.2px;font-size:24px;letter-spacing:-0.5px">Period2</div>
<div class="b" style="left:181.7px;top:156.0px;width:127.5px;height:7.5px;background:#e7e7e7;border:1.5px solid #b9b9b9"></div>
<div class="b" style="left:198.0px;top:140.0px;width:21px;height:38px;background:#cdcdcd;border:1px solid #c0c0c0;border-radius:3px"></div>
<div class="b" style="left:344.0px;top:140.0px;width:125px;height:38px;background:#f9f9f9;border:1.5px solid #acacac"></div>
<div class="t" style="left:344.0px;width:115px;text-align:right;top:148.7px;font-size:24px;letter-spacing:-0.8px">13</div>
<div class="b" style="left:468.7px;top:140.0px;width:34px;height:38px;background:#e0e0e0;border:2.5px solid #8a8a8a"></div>
<div class="b" style="left:469.7px;top:157.5px;width:32px;height:2.5px;background:#8a8a8a"></div>
<svg class="b" style="left:475.7px;top:144.0px" width="20" height="30" viewBox="0 0 20 30"><path d="M2.5 10.5 L10 4 L17.5 10.5" fill="none" stroke="#111" stroke-width="3.8"/><path d="M2.5 19.5 L10 26 L17.5 19.5" fill="none" stroke="#111" stroke-width="3.8"/></svg>
<div class="t" style="left:7.7px;top:199.2px;font-size:24px;letter-spacing:-0.5px">How many</div>
<div class="b" style="left:181.7px;top:221.5px;width:127.5px;height:7.5px;background:#e7e7e7;border:1.5px solid #b9b9b9"></div>
<div class="b" style="left:263.7px;top:206.1px;width:21px;height:38px;background:#cdcdcd;border:1px solid #c0c0c0;border-radius:3px"></div>
<div class="b" style="left:344.0px;top:206.1px;width:125px;height:38px;background:#f9f9f9;border:1.5px solid #acacac"></div>
<div class="t" style="left:344.0px;width:115px;text-align:right;top:214.8px;font-size:24px;letter-spacing:-0.8px">40</div>
<div class="b" style="left:468.7px;top:206.1px;width:34px;height:38px;background:#e0e0e0;border:2.5px solid #8a8a8a"></div>
<div class="b" style="left:469.7px;top:223.6px;width:32px;height:2.5px;background:#8a8a8a"></div>
<svg class="b" style="left:475.7px;top:210.1px" width="20" height="30" viewBox="0 0 20 30"><path d="M2.5 10.5 L10 4 L17.5 10.5" fill="none" stroke="#111" stroke-width="3.8"/><path d="M2.5 19.5 L10 26 L17.5 19.5" fill="none" stroke="#111" stroke-width="3.8"/></svg>
</div>
<div class="b" style="left:1886.5px;top:1206.8px;width:32.1px;height:277.2px;background:#e3e3e3;border:1.5px solid #c2c2c2"></div>
<div class="b" style="left:1888.0px;top:1240.0px;width:29.0px;height:133.0px;background:#c9c9c9"></div>
<div class="b" style="left:1888.0px;top:1208.0px;width:29.0px;height:29.6px;background:#e9e9e9;border-bottom:1.5px solid #c6c6c6"></div>
<div class="b" style="left:1888.0px;top:1453.0px;width:29.0px;height:29.5px;background:#e9e9e9;border-top:1.5px solid #c6c6c6"></div>
<svg class="b" style="left:1893.0px;top:1215.0px;" width="18" height="14" viewBox="0 0 18 14"><path d="M2 11 L9 3 L16 11" fill="none" stroke="#111" stroke-width="2.6"/></svg>
<svg class="b" style="left:1893.0px;top:1461.0px;" width="18" height="14" viewBox="0 0 18 14"><path d="M2 3 L9 11 L16 3" fill="none" stroke="#111" stroke-width="2.6"/></svg>
<div class="b" style="left:1744.5px;top:1514.3px;width:98.5px;height:38.7px;background:#e1e1e1;border:1.5px solid #adadad"></div>
<div class="t" style="left:1759.2px;top:1520.0px;font-size:24px;font-weight:400;color:#0d0d0d;letter-spacing:-0.7px;">Cancel</div>
<div class="b" style="left:1852.2px;top:1514.3px;width:79.0px;height:38.7px;background:#e1e1e1;border:1.5px solid #adadad"></div>
<div class="t" style="left:1876.0px;top:1520.0px;font-size:24px;font-weight:400;color:#0d0d0d;letter-spacing:-0.3px;">OK</div></body></html>
